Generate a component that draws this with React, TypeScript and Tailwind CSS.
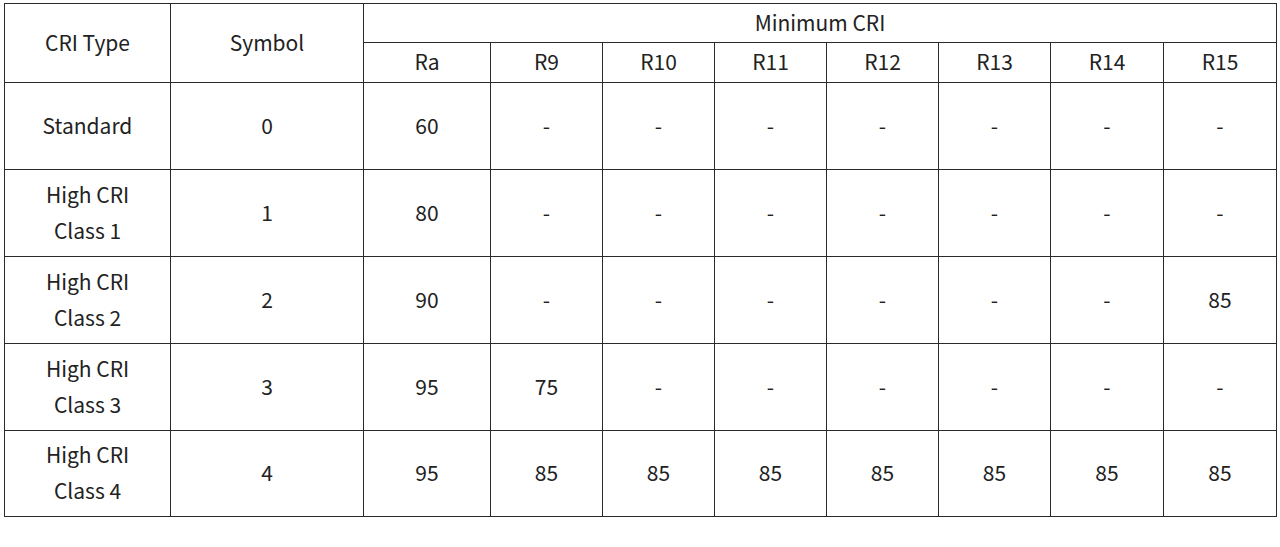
import React from 'react';

const cols = ['Ra', 'R9', 'R10', 'R11', 'R12', 'R13', 'R14', 'R15'];

const rows: { type: string[]; symbol: string; values: string[] }[] = [
  { type: ['Standard'], symbol: '0', values: ['60', '-', '-', '-', '-', '-', '-', '-'] },
  { type: ['High CRI', 'Class 1'], symbol: '1', values: ['80', '-', '-', '-', '-', '-', '-', '-'] },
  { type: ['High CRI', 'Class 2'], symbol: '2', values: ['90', '-', '-', '-', '-', '-', '-', '85'] },
  { type: ['High CRI', 'Class 3'], symbol: '3', values: ['95', '75', '-', '-', '-', '-', '-', '-'] },
  { type: ['High CRI', 'Class 4'], symbol: '4', values: ['95', '85', '85', '85', '85', '85', '85', '85'] },
];

const cell = 'border border-[#2a2a2a] text-center align-middle p-0 pb-[3px]';
const head = `${cell} font-normal leading-[28px]`;

const App = () => {
  return (
    <div
      className="w-[1280px] h-[547px] bg-white pt-[3px] pl-[4px] text-[21px] leading-[36px] text-[#222]"
      style={{ fontFamily: '"Noto Sans CJK KR", "Noto Sans", sans-serif' }}
    >
      <table className="table-fixed border-collapse w-[1272px]">
        <colgroup>
          <col className="w-[166px]" />
          <col className="w-[193px]" />
          <col className="w-[127px]" />
          <col className="w-[112px]" />
          <col className="w-[112px]" />
          <col className="w-[112px]" />
          <col className="w-[112px]" />
          <col className="w-[112px]" />
          <col className="w-[113px]" />
          <col className="w-[113px]" />
        </colgroup>
        <thead>
          <tr className="h-[39px]">
            <th rowSpan={2} className={head}>CRI Type</th>
            <th rowSpan={2} className={head}>Symbol</th>
            <th colSpan={8} className={head}>Minimum CRI</th>
          </tr>
          <tr className="h-[40px]">
            {cols.map((c) => (
              <th key={c} className={head}>{c}</th>
            ))}
          </tr>
        </thead>
        <tbody>
          {rows.map((r, idx) => (
            <tr key={r.symbol} className={idx === rows.length - 1 ? 'h-[86px]' : 'h-[87px]'}>
              <td className={cell}>
                {r.type.map((t) => (
                  <div key={t}>{t}</div>
                ))}
              </td>
              <td className={cell}>{r.symbol}</td>
              {r.values.map((v, i) => (
                <td key={i} className={cell}>{v}</td>
              ))}
            </tr>
          ))}
        </tbody>
      </table>
    </div>
  );
};

export default App;
